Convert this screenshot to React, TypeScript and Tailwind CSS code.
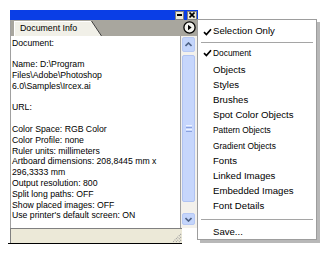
import React from "react";

const infoLines: (string | null)[] = [
  "Document:",
  null,
  "Name: D:\\Program",
  "Files\\Adobe\\Photoshop",
  "6.0\\Samples\\Ircex.ai",
  null,
  "URL:",
  null,
  "Color Space: RGB Color",
  "Color Profile: none",
  "Ruler units: millimeters",
  "Artboard dimensions: 208,8445 mm x",
  "296,3333 mm",
  "Output resolution: 800",
  "Split long paths: OFF",
  "Show placed images: OFF",
  "Use printer's default screen: ON",
];

const menuItems = [
  { label: "Objects", small: false },
  { label: "Styles", small: false },
  { label: "Brushes", small: false },
  { label: "Spot Color Objects", small: false },
  { label: "Pattern Objects", small: true },
  { label: "Gradient Objects", small: true },
  { label: "Fonts", small: false },
  { label: "Linked Images", small: false },
  { label: "Embedded Images", small: false },
  { label: "Font Details", small: false },
];

function Check() {
  return (
    <svg width="9" height="8" viewBox="0 0 9 8" className="absolute left-[5px] top-1/2 -translate-y-1/2">
      <path d="M1 4.2 L3.4 6.6 L8 1.2" fill="none" stroke="#000" strokeWidth="1.7" />
    </svg>
  );
}

export default function App() {
  return (
    <div className="relative w-[324px] h-[257px] bg-white overflow-hidden" style={{ fontFamily: '"Liberation Sans", Arial, sans-serif' }}>
      {/* palette window */}
      <div className="ml-[10px] pt-[10px] w-[188px]">
        {/* title bar */}
        <div className="flex h-[10px] items-center justify-end gap-[3px] bg-[#0a3ee6] pr-[1px]">
          <div className="flex h-[9px] w-[9px] items-center justify-center border border-[#808080] bg-[#ece9d8]">
            <div className="h-[2px] w-[5px] bg-black" />
          </div>
          <div className="flex h-[9px] w-[10px] items-center justify-center border border-[#808080] bg-[#ece9d8]">
            <svg width="6" height="6" viewBox="0 0 6 6">
              <path d="M0.5 0.5 L5.5 5.5 M5.5 0.5 L0.5 5.5" stroke="#000" strokeWidth="1.6" />
            </svg>
          </div>
        </div>

        {/* tab row */}
        <div className="relative flex h-[16px] items-end justify-between border-l border-[#a0a0a0] bg-[#a8a69e]">
          <div className="relative ml-[3px] flex h-[15px] items-center">
            <div className="flex h-full w-[77px] items-center border-l border-t border-white bg-[#f1f0e8] pl-[5px] text-[8.8px] text-black">
              Document Info
            </div>
            <svg width="11" height="15" viewBox="0 0 11 15" className="block">
              <path d="M0 0 L0.5 0 L10.5 15 L0 15 Z" fill="#f1f0e8" />
              <path d="M0.5 0 L10.5 15" stroke="#404040" strokeWidth="1" />
            </svg>
          </div>
          <svg width="13" height="13" viewBox="0 0 13 13" className="mb-[2px] mr-[2px]">
            <circle cx="6.5" cy="6.5" r="5.6" fill="#f4f4f0" stroke="#000" strokeWidth="1.3" />
            <path d="M5 3.8 L8.6 6.5 L5 9.2 Z" fill="#000" />
          </svg>
        </div>

        {/* body */}
        <div className="flex h-[192px] border-l border-[#a0a0a0]">
          <div className="w-[170px] overflow-hidden whitespace-nowrap border-r border-[#a0a0a0] bg-white pl-[1px] pt-[1.6px] text-[8.7px] leading-[10.8px] text-black">
            {infoLines.map((l, i) => (
              <div key={i} className="h-[10.8px]">
                {l ?? ""}
              </div>
            ))}
          </div>
          {/* scrollbar */}
          <div className="flex w-[16px] flex-col bg-[#f3f1ec] py-[1px] pl-[1px] pr-[2px]">
            <div className="flex h-[15px] items-center justify-center rounded-[2px] border border-[#b6c8f4] bg-[#c4d5fb]">
              <svg width="7" height="5" viewBox="0 0 7 5">
                <path d="M0.5 4 L3.5 1 L6.5 4" fill="none" stroke="#4d6185" strokeWidth="1.6" />
              </svg>
            </div>
            <div className="mt-[3px] flex h-[147px] items-center justify-center rounded-[2px] border border-[#b0c3f2] bg-[#c6d6fc]">
              <div className="flex flex-col gap-[1px]">
                <div className="h-[1px] w-[6px] bg-[#eef3fe]" />
                <div className="h-[1px] w-[6px] bg-[#8aa2e0]" />
                <div className="h-[1px] w-[6px] bg-[#eef3fe]" />
                <div className="h-[1px] w-[6px] bg-[#8aa2e0]" />
              </div>
            </div>
            <div className="flex-1" />
            <div className="mb-[2px] flex h-[12px] items-center justify-center rounded-[2px] border border-[#b6c8f4] bg-[#c4d5fb]">
              <svg width="7" height="5" viewBox="0 0 7 5">
                <path d="M0.5 1 L3.5 4 L6.5 1" fill="none" stroke="#4d6185" strokeWidth="1.6" />
              </svg>
            </div>
          </div>
        </div>

        {/* status bar */}
        <div className="relative flex h-[15px] w-[172px] justify-end border-l border-t border-[#808080] bg-[#ece9d8]">
          <svg width="11" height="11" viewBox="0 0 11 11" className="mt-[3px]">
            <path d="M10 2 L2 10 M10 5 L5 10 M10 8 L8 10" stroke="#a0a0a0" strokeWidth="1.2" strokeDasharray="1 1" />
          </svg>
        </div>
        <div className="-ml-[2px] h-[1px] w-[174px] bg-black" />
      </div>

      {/* flyout menu */}
      <div className="absolute left-[197px] top-[19px] h-[221px] w-[120px] border border-[#9d9d9d] bg-white text-black shadow-[3px_3px_0_#b8b8b8]">
        <div className="relative mt-[3px] flex h-[17px] items-center pl-[15px] text-[9.6px]">
          <Check />
          Selection Only
        </div>
        <div className="mx-[3px] mt-[1.5px] h-[1px] bg-[#a5a5a5]" />
        <div className="relative mt-[3.5px] flex h-[14px] items-center pl-[15px] text-[8.4px]">
          <Check />
          Document
        </div>
        <div className="mt-[2.4px]">
          {menuItems.map((m) => (
            <div key={m.label} className={`flex h-[15.2px] items-center pl-[15px] ${m.small ? "text-[8.4px]" : "text-[9.6px]"}`}>
              {m.label}
            </div>
          ))}
        </div>
        <div className="mx-[3px] mt-[4.6px] h-[1px] bg-[#a5a5a5]" />
        <div className="mt-[4px] flex h-[16px] items-center pl-[15px] text-[9.6px]">Save...</div>
      </div>
    </div>
  );
}
